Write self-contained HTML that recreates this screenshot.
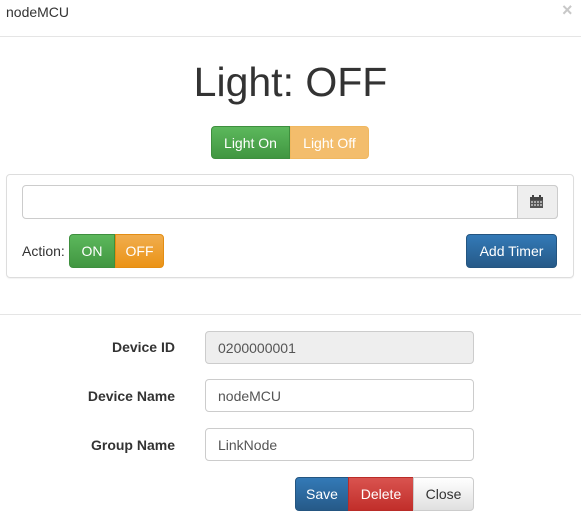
<!DOCTYPE html>
<html><head><meta charset="utf-8"><style>
*{box-sizing:border-box;margin:0;padding:0}
body{width:581px;height:518px;background:#fff;font-family:"Liberation Sans",sans-serif;color:#333;position:relative;overflow:hidden;font-size:14px}
.a{position:absolute}
.btn{position:absolute;color:#fff;font-size:14px;display:flex;align-items:center;justify-content:center;}
.inp{position:absolute;border:1px solid #ccc;border-radius:4px;background:#fff;font-size:14px;padding-left:12px;display:flex;align-items:center;color:#555}
.lbl{position:absolute;right:406px;font-weight:bold;font-size:14px}
</style></head><body>
<div class="a" style="left:6px;top:4px;font-size:14px">nodeMCU</div>
<div class="a" style="left:562px;top:0px;font-size:18px;color:#c8c8c8;font-weight:bold">×</div>
<div class="a" style="left:0;top:36px;width:581px;height:1px;background:#e5e5e5"></div>
<div class="a" style="left:0;top:59px;width:581px;text-align:center;font-size:41px;color:#333">Light: OFF</div>
<div class="btn" style="left:211px;top:126px;width:79px;height:33px;background:linear-gradient(#5cb85c,#419641);border:1px solid #3e8f3e;border-radius:4px 0 0 4px">Light On</div>
<div class="btn" style="left:290px;top:126px;width:79px;height:33px;background:#f3bd6c;border:1px solid #f0b860;border-radius:0 4px 4px 0">Light Off</div>
<div class="a" style="left:6px;top:174px;width:568px;height:104px;border:1px solid #ddd;border-radius:4px;box-shadow:0 1px 1px rgba(0,0,0,.05)"></div>
<div class="inp" style="left:22px;top:185px;width:536px;height:34px"></div>
<div class="a" style="left:517px;top:185px;width:41px;height:34px;background:#eee;border:1px solid #ccc;border-radius:0 4px 4px 0"></div>
<svg class="a" style="left:530px;top:195px" width="13" height="13" viewBox="0 0 13 13"><rect x="0" y="2" width="13" height="11" fill="#555"/><rect x="0" y="2" width="13" height="3" fill="#444"/><rect x="2" y="0" width="2" height="3" fill="#444"/><rect x="9" y="0" width="2" height="3" fill="#444"/><g fill="#aaa"><rect x="1" y="6" width="2" height="2"/><rect x="4" y="6" width="2" height="2"/><rect x="7" y="6" width="2" height="2"/><rect x="10" y="6" width="2" height="2"/><rect x="1" y="9" width="2" height="2"/><rect x="4" y="9" width="2" height="2"/><rect x="7" y="9" width="2" height="2"/><rect x="10" y="9" width="2" height="2"/></g></svg>
<div class="a" style="left:22px;top:243px;font-size:14px">Action:</div>
<div class="btn" style="left:69px;top:234px;width:46px;height:34px;background:linear-gradient(#5cb85c,#419641);border:1px solid #3e8f3e;border-radius:4px 0 0 4px">ON</div>
<div class="btn" style="left:115px;top:234px;width:49px;height:34px;background:linear-gradient(#f0ad4e,#eb9316);border:1px solid #e38d13;border-radius:0 4px 4px 0">OFF</div>
<div class="btn" style="left:466px;top:234px;width:91px;height:34px;background:linear-gradient(#337ab7,#265a88);border:1px solid #245580;border-radius:4px">Add Timer</div>
<div class="a" style="left:0;top:314px;width:581px;height:1px;background:#e5e5e5"></div>
<div class="lbl" style="top:339px">Device ID</div>
<div class="inp" style="left:205px;top:331px;width:269px;height:33px;background:#eee">0200000001</div>
<div class="lbl" style="top:388px">Device Name</div>
<div class="inp" style="left:205px;top:379px;width:269px;height:33px">nodeMCU</div>
<div class="lbl" style="top:437px">Group Name</div>
<div class="inp" style="left:205px;top:428px;width:269px;height:33px">LinkNode</div>
<div class="btn" style="left:295px;top:477px;width:54px;height:34px;background:linear-gradient(#337ab7,#265a88);border:1px solid #245580;border-radius:4px 0 0 4px">Save</div>
<div class="btn" style="left:348px;top:477px;width:66px;height:34px;background:linear-gradient(#d9534f,#c12e2a);border:1px solid #b92c28">Delete</div>
<div class="btn" style="left:413px;top:477px;width:61px;height:34px;background:linear-gradient(#fff,#e0e0e0);border:1px solid #ccc;border-radius:0 4px 4px 0;color:#333">Close</div>
</body></html>
